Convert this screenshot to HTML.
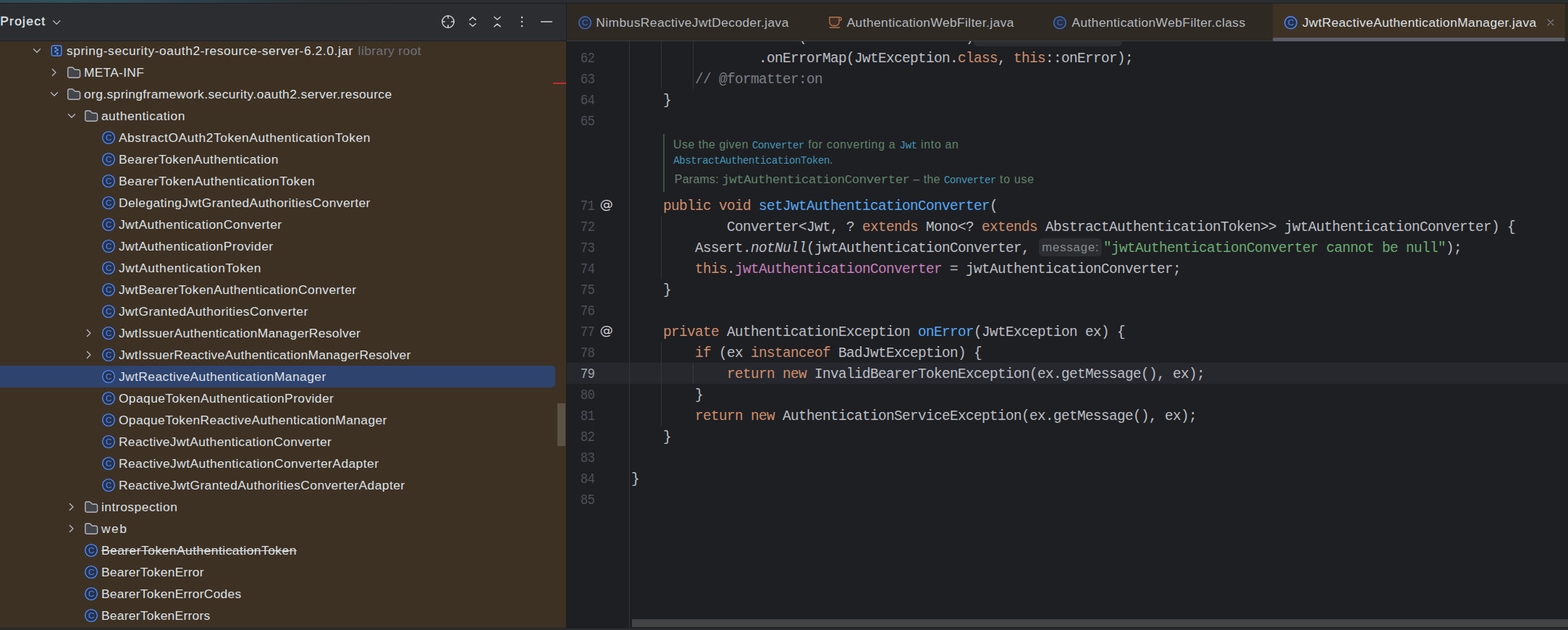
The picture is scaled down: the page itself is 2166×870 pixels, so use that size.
<!DOCTYPE html>
<html lang="en">
<head>
<meta charset="utf-8">
<title>JwtReactiveAuthenticationManager.java</title>
<style>
*{box-sizing:border-box}
html,body{margin:0;padding:0;background:#1e1f22}
body{width:2166px;height:870px;position:relative;overflow:hidden;font-family:"Liberation Sans",sans-serif;font-size:17.4px;color:#dfe1e5;-webkit-font-smoothing:antialiased}
div,span,svg{position:absolute}
span span{position:static}
.ic{overflow:visible}
.ui{font-family:"Liberation Sans",sans-serif;font-size:17.4px;line-height:30px;height:30px;white-space:pre}
.t{color:#dfe1e5}
.g{color:#6f737a}
.b{-webkit-text-stroke:0.4px #dfe1e5}
.strike{text-decoration:line-through;text-decoration-thickness:1.3px}
.tab{font-family:"Liberation Sans",sans-serif;font-size:17.4px;line-height:30px;height:30px;white-space:pre;color:#b4b8bf}
.tab.act{color:#dfe1e5}
.ln{font-family:"Liberation Mono",monospace;font-size:19.5px;letter-spacing:-0.9px;line-height:29px;height:29px;white-space:pre;color:#4b5059;text-align:right;width:40px;left:780.9px;transform:scaleX(0.89);transform-origin:100% 50%}
.ln.cur{color:#a1a3ab}
.cl{font-family:"Liberation Mono",monospace;font-size:19.5px;letter-spacing:-0.7019px;line-height:29px;height:29px;white-space:pre;color:#bcbec4;left:871.9px}
.k{color:#cf8e6d}
.f{color:#56a8f5}
.p{color:#c77dbb}
.s{color:#6aab73}
.c{color:#7a7e85}
.i{font-style:italic}
.guide{width:1px;background:#313438}
.doc{font-family:"Liberation Sans",sans-serif;white-space:pre;color:#62856d;line-height:22px;height:22px}
.dm{font-family:"Liberation Mono",monospace}
.dl{color:#4297bb}
.p0{color:#6a8471}
.hint{font-family:"Liberation Sans",sans-serif;white-space:pre;color:#868a91}
</style>
</head>
<body>

<div id="topstrip" style="left:0;top:0;width:2166px;height:4px;background:linear-gradient(90deg,#2f4a57 0,#30505c 90px,#2f4754 200px,#2c3a42 330px,#2b2f33 450px,#2b2d30 560px)"></div>
<div style="left:0;top:4px;width:2166px;height:1px;background:#1e1f22"></div>
<div id="project" style="left:0;top:5px;width:782px;height:862px;background:#3d3124;overflow:hidden">
<div id="phead" style="left:0;top:0;width:782px;height:51px;background:#2b2d30"></div>
<div style="left:0;top:51px;width:782px;height:1px;background:#1e1f22"></div>
</div>
<span class="ui t b" id="h_project" style="left:0.23px;top:14.2px;letter-spacing:1.276px;">Project</span>
<svg class="ic" style="left:66px;top:19px" width="25" height="25" viewBox="0 0 25 25" fill="none"><g transform="translate(1.45 1.35) scale(1.34375)"><path d="M4.65 6.3 8 9.7l3.35-3.4" stroke="#b4b8bf" stroke-width="1.0" stroke-linecap="round" stroke-linejoin="round"/></g></svg>
<svg class="ic" style="left:607px;top:18px" width="25" height="25" viewBox="0 0 25 25" fill="none"><g transform="translate(1.25 1.25) scale(1.34375)"><circle cx="8" cy="8" r="6.1" stroke="#ced0d6" stroke-width="1.1"/><path d="M8 1.9v3M8 11.1v3M1.9 8h3M11.1 8h3" stroke="#ced0d6" stroke-width="1.15"/></g></svg>
<svg class="ic" style="left:641px;top:18px" width="25" height="25" viewBox="0 0 25 25" fill="none"><g transform="translate(1.25 1.35) scale(1.34375)"><path d="M4.9 6 8 3.4l3.1 2.6M4.9 10 8 12.6l3.1-2.6" stroke="#ced0d6" stroke-width="1.1" stroke-linecap="round" stroke-linejoin="round"/></g></svg>
<svg class="ic" style="left:675px;top:18px" width="25" height="25" viewBox="0 0 25 25" fill="none"><g transform="translate(1.25 1.35) scale(1.34375)"><path d="M4.9 3.1 8 5.7l3.1-2.6M4.9 12.9 8 10.3l3.1 2.6" stroke="#ced0d6" stroke-width="1.1" stroke-linecap="round" stroke-linejoin="round"/></g></svg>
<svg class="ic" style="left:709px;top:18px" width="25" height="25" viewBox="0 0 25 25" fill="none"><g transform="translate(1.25 1.25) scale(1.34375)"><circle cx="8" cy="3.6" r="0.95" fill="#ced0d6"/><circle cx="8" cy="8" r="0.95" fill="#ced0d6"/><circle cx="8" cy="12.4" r="0.95" fill="#ced0d6"/></g></svg>
<svg class="ic" style="left:743px;top:18px" width="25" height="25" viewBox="0 0 25 25" fill="none"><g transform="translate(1.25 1.25) scale(1.34375)"><path d="M2.1 8h11.8" stroke="#ced0d6" stroke-width="1.15"/></g></svg>
<svg class="ic" style="left:39px;top:58px" width="25" height="25" viewBox="0 0 25 25" fill="none"><g transform="translate(1.25 1.25) scale(1.34375)"><path d="M4.65 6.3 8 9.7l3.35-3.4" stroke="#b4b8bf" stroke-width="1.0" stroke-linecap="round" stroke-linejoin="round"/></g></svg>
<svg class="ic" style="left:66px;top:58px" width="25" height="25" viewBox="0 0 25 25" fill="none"><g transform="translate(1.25 1.25) scale(1.34375)"><rect x="2.95" y="2.75" width="10.15" height="10.5" rx="1.9" fill="#25324d" stroke="#548af7" stroke-width="1.05"/><circle cx="7.2" cy="5.25" r="1.15" fill="#5a93fb"/><circle cx="9.0" cy="7.1" r="1.15" fill="#5a93fb"/><circle cx="7.0" cy="8.8" r="1.15" fill="#5a93fb"/><circle cx="9.0" cy="10.85" r="1.15" fill="#5a93fb"/></g></svg>
<span class="ui t" id="r0" style="left:91.90px;top:55.0px;letter-spacing:0.580px;">spring-security-oauth2-resource-server-6.2.0.jar</span>
<span class="ui g" id="r0b" style="left:494.62px;top:55.0px;letter-spacing:0.444px;">library root</span>
<svg class="ic" style="left:62px;top:88px" width="25" height="25" viewBox="0 0 25 25" fill="none"><g transform="translate(1.90 1.25) scale(1.34375)"><path d="M6.3 4.65 9.7 8l-3.4 3.35" stroke="#b4b8bf" stroke-width="1.0" stroke-linecap="round" stroke-linejoin="round"/></g></svg>
<svg class="ic" style="left:90px;top:88px" width="25" height="25" viewBox="0 0 25 25" fill="none"><g transform="translate(1.25 1.25) scale(1.34375)"><path d="M1.9 4.3a1.5 1.5 0 0 1 1.5-1.5h2.7a1.5 1.5 0 0 1 1.05.45l1.55 1.55a1.5 1.5 0 0 0 1.05.45h3.1a1.5 1.5 0 0 1 1.5 1.5v5.1a1.5 1.5 0 0 1-1.5 1.5h-9.45a1.5 1.5 0 0 1-1.5-1.5z" fill="#43454a" stroke="#b6b8be" stroke-width="1.05" stroke-linejoin="round"/></g></svg>
<span class="ui t" id="r1" style="left:115.90px;top:85.0px;letter-spacing:0.298px;">META-INF</span>
<svg class="ic" style="left:63px;top:118px" width="25" height="25" viewBox="0 0 25 25" fill="none"><g transform="translate(1.25 1.25) scale(1.34375)"><path d="M4.65 6.3 8 9.7l3.35-3.4" stroke="#b4b8bf" stroke-width="1.0" stroke-linecap="round" stroke-linejoin="round"/></g></svg>
<svg class="ic" style="left:90px;top:118px" width="25" height="25" viewBox="0 0 25 25" fill="none"><g transform="translate(1.25 1.25) scale(1.34375)"><path d="M1.9 4.3a1.5 1.5 0 0 1 1.5-1.5h2.7a1.5 1.5 0 0 1 1.05.45l1.55 1.55a1.5 1.5 0 0 0 1.05.45h3.1a1.5 1.5 0 0 1 1.5 1.5v5.1a1.5 1.5 0 0 1-1.5 1.5h-9.45a1.5 1.5 0 0 1-1.5-1.5z" fill="#43454a" stroke="#b6b8be" stroke-width="1.05" stroke-linejoin="round"/></g></svg>
<span class="ui t" id="r2" style="left:115.90px;top:115.0px;letter-spacing:0.412px;">org.springframework.security.oauth2.server.resource</span>
<svg class="ic" style="left:87px;top:148px" width="25" height="25" viewBox="0 0 25 25" fill="none"><g transform="translate(1.25 1.25) scale(1.34375)"><path d="M4.65 6.3 8 9.7l3.35-3.4" stroke="#b4b8bf" stroke-width="1.0" stroke-linecap="round" stroke-linejoin="round"/></g></svg>
<svg class="ic" style="left:114px;top:148px" width="25" height="25" viewBox="0 0 25 25" fill="none"><g transform="translate(1.25 1.25) scale(1.34375)"><path d="M1.9 4.3a1.5 1.5 0 0 1 1.5-1.5h2.7a1.5 1.5 0 0 1 1.05.45l1.55 1.55a1.5 1.5 0 0 0 1.05.45h3.1a1.5 1.5 0 0 1 1.5 1.5v5.1a1.5 1.5 0 0 1-1.5 1.5h-9.45a1.5 1.5 0 0 1-1.5-1.5z" fill="#43454a" stroke="#b6b8be" stroke-width="1.05" stroke-linejoin="round"/></g></svg>
<span class="ui t" id="r3" style="left:139.90px;top:145.0px;letter-spacing:0.549px;">authentication</span>
<svg class="ic" style="left:138px;top:178px" width="25" height="25" viewBox="0 0 25 25" fill="none"><g transform="translate(1.25 1.25) scale(1.34375)"><circle cx="8" cy="8" r="6.2" fill="#25324d" stroke="#548af7" stroke-width="1.05"/><text x="8.05" y="11.05" font-family="Liberation Sans, sans-serif" font-size="8.6" text-anchor="middle" fill="#548af7">C</text></g></svg>
<span class="ui t" id="r4" style="left:163.90px;top:175.0px;letter-spacing:0.590px;">AbstractOAuth2TokenAuthenticationToken</span>
<svg class="ic" style="left:138px;top:208px" width="25" height="25" viewBox="0 0 25 25" fill="none"><g transform="translate(1.25 1.25) scale(1.34375)"><circle cx="8" cy="8" r="6.2" fill="#25324d" stroke="#548af7" stroke-width="1.05"/><text x="8.05" y="11.05" font-family="Liberation Sans, sans-serif" font-size="8.6" text-anchor="middle" fill="#548af7">C</text></g></svg>
<span class="ui t" id="r5" style="left:163.90px;top:205.0px;letter-spacing:0.485px;">BearerTokenAuthentication</span>
<svg class="ic" style="left:138px;top:238px" width="25" height="25" viewBox="0 0 25 25" fill="none"><g transform="translate(1.25 1.25) scale(1.34375)"><circle cx="8" cy="8" r="6.2" fill="#25324d" stroke="#548af7" stroke-width="1.05"/><text x="8.05" y="11.05" font-family="Liberation Sans, sans-serif" font-size="8.6" text-anchor="middle" fill="#548af7">C</text></g></svg>
<span class="ui t" id="r6" style="left:163.90px;top:235.0px;letter-spacing:0.538px;">BearerTokenAuthenticationToken</span>
<svg class="ic" style="left:138px;top:268px" width="25" height="25" viewBox="0 0 25 25" fill="none"><g transform="translate(1.25 1.25) scale(1.34375)"><circle cx="8" cy="8" r="6.2" fill="#25324d" stroke="#548af7" stroke-width="1.05"/><text x="8.05" y="11.05" font-family="Liberation Sans, sans-serif" font-size="8.6" text-anchor="middle" fill="#548af7">C</text></g></svg>
<span class="ui t" id="r7" style="left:163.90px;top:265.0px;letter-spacing:0.433px;">DelegatingJwtGrantedAuthoritiesConverter</span>
<svg class="ic" style="left:138px;top:298px" width="25" height="25" viewBox="0 0 25 25" fill="none"><g transform="translate(1.25 1.25) scale(1.34375)"><circle cx="8" cy="8" r="6.2" fill="#25324d" stroke="#548af7" stroke-width="1.05"/><text x="8.05" y="11.05" font-family="Liberation Sans, sans-serif" font-size="8.6" text-anchor="middle" fill="#548af7">C</text></g></svg>
<span class="ui t" id="r8" style="left:163.90px;top:295.0px;letter-spacing:0.503px;">JwtAuthenticationConverter</span>
<svg class="ic" style="left:138px;top:328px" width="25" height="25" viewBox="0 0 25 25" fill="none"><g transform="translate(1.25 1.25) scale(1.34375)"><circle cx="8" cy="8" r="6.2" fill="#25324d" stroke="#548af7" stroke-width="1.05"/><text x="8.05" y="11.05" font-family="Liberation Sans, sans-serif" font-size="8.6" text-anchor="middle" fill="#548af7">C</text></g></svg>
<span class="ui t" id="r9" style="left:163.90px;top:325.0px;letter-spacing:0.506px;">JwtAuthenticationProvider</span>
<svg class="ic" style="left:138px;top:358px" width="25" height="25" viewBox="0 0 25 25" fill="none"><g transform="translate(1.25 1.25) scale(1.34375)"><circle cx="8" cy="8" r="6.2" fill="#25324d" stroke="#548af7" stroke-width="1.05"/><text x="8.05" y="11.05" font-family="Liberation Sans, sans-serif" font-size="8.6" text-anchor="middle" fill="#548af7">C</text></g></svg>
<span class="ui t" id="r10" style="left:163.90px;top:355.0px;letter-spacing:0.664px;">JwtAuthenticationToken</span>
<svg class="ic" style="left:138px;top:388px" width="25" height="25" viewBox="0 0 25 25" fill="none"><g transform="translate(1.25 1.25) scale(1.34375)"><circle cx="8" cy="8" r="6.2" fill="#25324d" stroke="#548af7" stroke-width="1.05"/><text x="8.05" y="11.05" font-family="Liberation Sans, sans-serif" font-size="8.6" text-anchor="middle" fill="#548af7">C</text></g></svg>
<span class="ui t" id="r11" style="left:163.90px;top:385.0px;letter-spacing:0.471px;">JwtBearerTokenAuthenticationConverter</span>
<svg class="ic" style="left:138px;top:418px" width="25" height="25" viewBox="0 0 25 25" fill="none"><g transform="translate(1.25 1.25) scale(1.34375)"><circle cx="8" cy="8" r="6.2" fill="#25324d" stroke="#548af7" stroke-width="1.05"/><text x="8.05" y="11.05" font-family="Liberation Sans, sans-serif" font-size="8.6" text-anchor="middle" fill="#548af7">C</text></g></svg>
<span class="ui t" id="r12" style="left:163.90px;top:415.0px;letter-spacing:0.478px;">JwtGrantedAuthoritiesConverter</span>
<svg class="ic" style="left:110px;top:448px" width="25" height="25" viewBox="0 0 25 25" fill="none"><g transform="translate(1.90 1.25) scale(1.34375)"><path d="M6.3 4.65 9.7 8l-3.4 3.35" stroke="#b4b8bf" stroke-width="1.0" stroke-linecap="round" stroke-linejoin="round"/></g></svg>
<svg class="ic" style="left:138px;top:448px" width="25" height="25" viewBox="0 0 25 25" fill="none"><g transform="translate(1.25 1.25) scale(1.34375)"><circle cx="8" cy="8" r="6.2" fill="#25324d" stroke="#548af7" stroke-width="1.05"/><text x="8.05" y="11.05" font-family="Liberation Sans, sans-serif" font-size="8.6" text-anchor="middle" fill="#548af7">C</text></g></svg>
<span class="ui t" id="r13" style="left:163.90px;top:445.0px;letter-spacing:0.354px;">JwtIssuerAuthenticationManagerResolver</span>
<svg class="ic" style="left:110px;top:478px" width="25" height="25" viewBox="0 0 25 25" fill="none"><g transform="translate(1.90 1.25) scale(1.34375)"><path d="M6.3 4.65 9.7 8l-3.4 3.35" stroke="#b4b8bf" stroke-width="1.0" stroke-linecap="round" stroke-linejoin="round"/></g></svg>
<svg class="ic" style="left:138px;top:478px" width="25" height="25" viewBox="0 0 25 25" fill="none"><g transform="translate(1.25 1.25) scale(1.34375)"><circle cx="8" cy="8" r="6.2" fill="#25324d" stroke="#548af7" stroke-width="1.05"/><text x="8.05" y="11.05" font-family="Liberation Sans, sans-serif" font-size="8.6" text-anchor="middle" fill="#548af7">C</text></g></svg>
<span class="ui t" id="r14" style="left:163.90px;top:475.0px;letter-spacing:0.330px;">JwtIssuerReactiveAuthenticationManagerResolver</span>
<div style="left:0;top:505px;width:767px;height:30px;background:#2e436e;border-radius:0 5px 5px 0"></div>
<svg class="ic" style="left:138px;top:508px" width="25" height="25" viewBox="0 0 25 25" fill="none"><g transform="translate(1.25 1.25) scale(1.34375)"><circle cx="8" cy="8" r="6.2" fill="#25324d" stroke="#548af7" stroke-width="1.05"/><text x="8.05" y="11.05" font-family="Liberation Sans, sans-serif" font-size="8.6" text-anchor="middle" fill="#548af7">C</text></g></svg>
<span class="ui t" id="r15" style="left:163.90px;top:505.0px;letter-spacing:0.443px;">JwtReactiveAuthenticationManager</span>
<svg class="ic" style="left:138px;top:538px" width="25" height="25" viewBox="0 0 25 25" fill="none"><g transform="translate(1.25 1.25) scale(1.34375)"><circle cx="8" cy="8" r="6.2" fill="#25324d" stroke="#548af7" stroke-width="1.05"/><text x="8.05" y="11.05" font-family="Liberation Sans, sans-serif" font-size="8.6" text-anchor="middle" fill="#548af7">C</text></g></svg>
<span class="ui t" id="r16" style="left:163.90px;top:535.0px;letter-spacing:0.428px;">OpaqueTokenAuthenticationProvider</span>
<svg class="ic" style="left:138px;top:568px" width="25" height="25" viewBox="0 0 25 25" fill="none"><g transform="translate(1.25 1.25) scale(1.34375)"><circle cx="8" cy="8" r="6.2" fill="#25324d" stroke="#548af7" stroke-width="1.05"/><text x="8.05" y="11.05" font-family="Liberation Sans, sans-serif" font-size="8.6" text-anchor="middle" fill="#548af7">C</text></g></svg>
<span class="ui t" id="r17" style="left:163.90px;top:565.0px;letter-spacing:0.401px;">OpaqueTokenReactiveAuthenticationManager</span>
<svg class="ic" style="left:138px;top:598px" width="25" height="25" viewBox="0 0 25 25" fill="none"><g transform="translate(1.25 1.25) scale(1.34375)"><circle cx="8" cy="8" r="6.2" fill="#25324d" stroke="#548af7" stroke-width="1.05"/><text x="8.05" y="11.05" font-family="Liberation Sans, sans-serif" font-size="8.6" text-anchor="middle" fill="#548af7">C</text></g></svg>
<span class="ui t" id="r18" style="left:163.90px;top:595.0px;letter-spacing:0.415px;">ReactiveJwtAuthenticationConverter</span>
<svg class="ic" style="left:138px;top:628px" width="25" height="25" viewBox="0 0 25 25" fill="none"><g transform="translate(1.25 1.25) scale(1.34375)"><circle cx="8" cy="8" r="6.2" fill="#25324d" stroke="#548af7" stroke-width="1.05"/><text x="8.05" y="11.05" font-family="Liberation Sans, sans-serif" font-size="8.6" text-anchor="middle" fill="#548af7">C</text></g></svg>
<span class="ui t" id="r19" style="left:163.90px;top:625.0px;letter-spacing:0.445px;">ReactiveJwtAuthenticationConverterAdapter</span>
<svg class="ic" style="left:138px;top:658px" width="25" height="25" viewBox="0 0 25 25" fill="none"><g transform="translate(1.25 1.25) scale(1.34375)"><circle cx="8" cy="8" r="6.2" fill="#25324d" stroke="#548af7" stroke-width="1.05"/><text x="8.05" y="11.05" font-family="Liberation Sans, sans-serif" font-size="8.6" text-anchor="middle" fill="#548af7">C</text></g></svg>
<span class="ui t" id="r20" style="left:163.90px;top:655.0px;letter-spacing:0.436px;">ReactiveJwtGrantedAuthoritiesConverterAdapter</span>
<svg class="ic" style="left:86px;top:688px" width="25" height="25" viewBox="0 0 25 25" fill="none"><g transform="translate(1.90 1.25) scale(1.34375)"><path d="M6.3 4.65 9.7 8l-3.4 3.35" stroke="#b4b8bf" stroke-width="1.0" stroke-linecap="round" stroke-linejoin="round"/></g></svg>
<svg class="ic" style="left:114px;top:688px" width="25" height="25" viewBox="0 0 25 25" fill="none"><g transform="translate(1.25 1.25) scale(1.34375)"><path d="M1.9 4.3a1.5 1.5 0 0 1 1.5-1.5h2.7a1.5 1.5 0 0 1 1.05.45l1.55 1.55a1.5 1.5 0 0 0 1.05.45h3.1a1.5 1.5 0 0 1 1.5 1.5v5.1a1.5 1.5 0 0 1-1.5 1.5h-9.45a1.5 1.5 0 0 1-1.5-1.5z" fill="#43454a" stroke="#b6b8be" stroke-width="1.05" stroke-linejoin="round"/></g></svg>
<span class="ui t" id="r21" style="left:139.90px;top:685.0px;letter-spacing:0.526px;">introspection</span>
<svg class="ic" style="left:86px;top:718px" width="25" height="25" viewBox="0 0 25 25" fill="none"><g transform="translate(1.90 1.25) scale(1.34375)"><path d="M6.3 4.65 9.7 8l-3.4 3.35" stroke="#b4b8bf" stroke-width="1.0" stroke-linecap="round" stroke-linejoin="round"/></g></svg>
<svg class="ic" style="left:114px;top:718px" width="25" height="25" viewBox="0 0 25 25" fill="none"><g transform="translate(1.25 1.25) scale(1.34375)"><path d="M1.9 4.3a1.5 1.5 0 0 1 1.5-1.5h2.7a1.5 1.5 0 0 1 1.05.45l1.55 1.55a1.5 1.5 0 0 0 1.05.45h3.1a1.5 1.5 0 0 1 1.5 1.5v5.1a1.5 1.5 0 0 1-1.5 1.5h-9.45a1.5 1.5 0 0 1-1.5-1.5z" fill="#43454a" stroke="#b6b8be" stroke-width="1.05" stroke-linejoin="round"/></g></svg>
<span class="ui t" id="r22" style="left:139.90px;top:715.0px;letter-spacing:1.511px;">web</span>
<svg class="ic" style="left:114px;top:748px" width="25" height="25" viewBox="0 0 25 25" fill="none"><g transform="translate(1.25 1.25) scale(1.34375)"><circle cx="8" cy="8" r="6.2" fill="#25324d" stroke="#548af7" stroke-width="1.05"/><text x="8.05" y="11.05" font-family="Liberation Sans, sans-serif" font-size="8.6" text-anchor="middle" fill="#548af7">C</text></g></svg>
<span class="ui t strike" id="r23" style="left:139.90px;top:745.0px;letter-spacing:0.492px;">BearerTokenAuthenticationToken</span>
<svg class="ic" style="left:114px;top:778px" width="25" height="25" viewBox="0 0 25 25" fill="none"><g transform="translate(1.25 1.25) scale(1.34375)"><circle cx="8" cy="8" r="6.2" fill="#25324d" stroke="#548af7" stroke-width="1.05"/><text x="8.05" y="11.05" font-family="Liberation Sans, sans-serif" font-size="8.6" text-anchor="middle" fill="#548af7">C</text></g></svg>
<span class="ui t" id="r24" style="left:139.90px;top:775.0px;letter-spacing:0.292px;">BearerTokenError</span>
<svg class="ic" style="left:114px;top:808px" width="25" height="25" viewBox="0 0 25 25" fill="none"><g transform="translate(1.25 1.25) scale(1.34375)"><circle cx="8" cy="8" r="6.2" fill="#25324d" stroke="#548af7" stroke-width="1.05"/><text x="8.05" y="11.05" font-family="Liberation Sans, sans-serif" font-size="8.6" text-anchor="middle" fill="#548af7">C</text></g></svg>
<span class="ui t" id="r25" style="left:139.90px;top:805.0px;letter-spacing:0.290px;">BearerTokenErrorCodes</span>
<svg class="ic" style="left:114px;top:838px" width="25" height="25" viewBox="0 0 25 25" fill="none"><g transform="translate(1.25 1.25) scale(1.34375)"><circle cx="8" cy="8" r="6.2" fill="#25324d" stroke="#548af7" stroke-width="1.05"/><text x="8.05" y="11.05" font-family="Liberation Sans, sans-serif" font-size="8.6" text-anchor="middle" fill="#548af7">C</text></g></svg>
<span class="ui t" id="r26" style="left:139.90px;top:835.0px;letter-spacing:0.279px;">BearerTokenErrors</span>
<div style="left:770px;top:557px;width:11px;height:59px;background:#5c5347"></div>
<div style="left:764px;top:114px;width:18px;height:2px;background:#c02e2e"></div>
<div style="left:782px;top:5px;width:1px;height:52px;background:#1e1f22"></div>
<div id="tabs" style="left:783px;top:5px;width:1383px;height:51px;background:#2e2923"></div>
<div style="left:783px;top:56px;width:1383px;height:1px;background:#393b40"></div>
<div style="left:1758px;top:5px;width:404px;height:51px;background:#3e3225"></div>
<div style="left:1758px;top:52px;width:404px;height:5px;background:#5b5e66;border-radius:2.5px"></div>
<div style="left:2162px;top:5px;width:4px;height:51px;background:#2b2825"></div>
<svg class="ic" style="left:796px;top:19px" width="25" height="25" viewBox="0 0 25 25" fill="none"><g transform="translate(1.35 1.55) scale(1.34375)"><circle cx="8" cy="8" r="6.2" fill="#262f45" stroke="#456eba" stroke-width="1.05"/><text x="8.05" y="11.05" font-family="Liberation Sans, sans-serif" font-size="8.6" text-anchor="middle" fill="#456eba">C</text></g></svg>
<span class="tab" id="tab1" style="left:823.36px;top:16.3px;letter-spacing:0.420px;">NimbusReactiveJwtDecoder.java</span>
<svg class="ic" style="left:1141px;top:19px" width="25" height="25" viewBox="0 0 25 25" fill="none"><g transform="translate(1.85 1.55) scale(1.34375)"><path d="M2.27 2.4H12.1V7.4a3.7 3.7 0 0 1-3.7 3.7H5.97a3.7 3.7 0 0 1-3.7-3.7z" fill="#3f2d27" stroke="#b4744f" stroke-width="1.0" stroke-linejoin="round"/><path d="M12.1 2.45h0.85a1.45 1.45 0 0 1 1.45 1.45v0.35a1.45 1.45 0 0 1-1.45 1.45h-0.85" stroke="#b4744f" stroke-width="1.0"/><path d="M2.55 13h10" stroke="#b4744f" stroke-width="1.0" stroke-linecap="round"/></g></svg>
<span class="tab" id="tab2" style="left:1169.64px;top:16.3px;letter-spacing:0.400px;">AuthenticationWebFilter.java</span>
<svg class="ic" style="left:1452px;top:19px" width="25" height="25" viewBox="0 0 25 25" fill="none"><g transform="translate(1.25 1.55) scale(1.34375)"><circle cx="8" cy="8" r="6.2" fill="#262f45" stroke="#456eba" stroke-width="1.05"/><text x="8.05" y="11.05" font-family="Liberation Sans, sans-serif" font-size="8.6" text-anchor="middle" fill="#456eba">C</text></g></svg>
<span class="tab" id="tab3" style="left:1480.43px;top:16.3px;letter-spacing:0.427px;">AuthenticationWebFilter.class</span>
<svg class="ic" style="left:1771px;top:19px" width="25" height="25" viewBox="0 0 25 25" fill="none"><g transform="translate(1.25 1.55) scale(1.34375)"><circle cx="8" cy="8" r="6.2" fill="#25324d" stroke="#548af7" stroke-width="1.05"/><text x="8.05" y="11.05" font-family="Liberation Sans, sans-serif" font-size="8.6" text-anchor="middle" fill="#548af7">C</text></g></svg>
<span class="tab act" id="tab4" style="left:1798.89px;top:16.3px;letter-spacing:0.415px;">JwtReactiveAuthenticationManager.java</span>
<svg class="ic" style="left:2130px;top:19px" width="25" height="25" viewBox="0 0 25 25" fill="none"><g transform="translate(1.25 1.25) scale(1.34375)"><path d="M5.1 5.1l5.8 5.8M10.9 5.1l-5.8 5.8" stroke="#7f838b" stroke-width="1.0" stroke-linecap="round"/></g></svg>
<div id="code" style="left:783px;top:57px;width:1383px;height:810px;overflow:hidden">
</div>
<div style="left:783px;top:500.5px;width:1383px;height:29px;background:#26282e"></div>
<div style="left:869px;top:57px;width:1px;height:810px;background:#313438"></div>
<div class="guide" style="left:913px;top:57px;height:65.5px;background:#313438"></div>
<div class="guide" style="left:957px;top:57px;height:65.5px;background:#313438"></div>
<div class="guide" style="left:913px;top:297.5px;height:87.0px;background:#313438"></div>
<div class="guide" style="left:913px;top:471.5px;height:116.0px;background:#313438"></div>
<div class="guide" style="left:957px;top:500.5px;height:29.0px;background:#36393e"></div>
<div style="left:783px;top:57px;width:1383px;height:12px;overflow:hidden"><span class="cl" style="left:88.89999999999998px;top:-19.2px">                .cast(Authentication.<span class="k">class</span>)</span><div style="left:562px;top:-18px;width:205px;height:24.5px;background:#2b2d30;border-radius:5px"></div></div>
<span class="ln" style="top:66.8px">62</span>
<span class="cl" style="top:66.8px">                .onErrorMap(JwtException.<span class="k">class</span>, <span class="k">this</span>::onError);</span>
<span class="ln" style="top:95.8px">63</span>
<span class="cl" style="top:95.8px">        <span class="c">// @formatter:on</span></span>
<span class="ln" style="top:124.8px">64</span>
<span class="cl" style="top:124.8px">    }</span>
<span class="ln" style="top:153.8px">65</span>
<span class="ln" style="top:270.8px">71</span>
<span class="cl" style="top:270.8px">    <span class="k">public</span> <span class="k">void</span> <span class="f">setJwtAuthenticationConverter</span>(</span>
<span class="ln" style="top:299.8px">72</span>
<span class="cl" style="top:299.8px">            Converter&lt;Jwt, ? <span class="k">extends</span> Mono&lt;? <span class="k">extends</span> AbstractAuthenticationToken&gt;&gt; jwtAuthenticationConverter) {</span>
<span class="ln" style="top:328.8px">73</span>
<span class="cl" style="top:328.8px">        Assert.<span class="i">notNull</span>(jwtAuthenticationConverter, </span>
<div style="left:1435px;top:329.0px;width:87px;height:24.5px;background:#2b2d30;border-radius:5px"></div>
<span class="hint" id="hint" style="left:1439.26px;top:329.7px;letter-spacing:0.817px;font-size:16.8px;line-height:24.5px;height:24.5px;">message:</span>
<span class="cl" style="left:1524px;top:328.8px"><span class="s">"jwtAuthenticationConverter cannot be null"</span>);</span>
<span class="ln" style="top:357.8px">74</span>
<span class="cl" style="top:357.8px">        <span class="k">this</span>.<span class="p">jwtAuthenticationConverter</span> = jwtAuthenticationConverter;</span>
<span class="ln" style="top:386.8px">75</span>
<span class="cl" style="top:386.8px">    }</span>
<span class="ln" style="top:415.8px">76</span>
<span class="ln" style="top:444.8px">77</span>
<span class="cl" style="top:444.8px">    <span class="k">private</span> AuthenticationException <span class="f">onError</span>(JwtException ex) {</span>
<span class="ln" style="top:473.8px">78</span>
<span class="cl" style="top:473.8px">        <span class="k">if</span> (ex <span class="k">instanceof</span> BadJwtException) {</span>
<span class="ln cur" style="top:502.8px">79</span>
<span class="cl" style="top:502.8px">            <span class="k">return</span> <span class="k">new</span> InvalidBearerTokenException(ex.getMessage(), ex);</span>
<span class="ln" style="top:531.8px">80</span>
<span class="cl" style="top:531.8px">        }</span>
<span class="ln" style="top:560.8px">81</span>
<span class="cl" style="top:560.8px">        <span class="k">return</span> <span class="k">new</span> AuthenticationServiceException(ex.getMessage(), ex);</span>
<span class="ln" style="top:589.8px">82</span>
<span class="cl" style="top:589.8px">    }</span>
<span class="ln" style="top:618.8px">83</span>
<span class="ln" style="top:647.8px">84</span>
<span class="cl" style="top:647.8px">}</span>
<span class="ln" style="top:676.8px">85</span>
<svg class="ic" style="left:823px;top:268px" width="28" height="28" viewBox="0 0 28 28"><text x="14.60" y="19.80" font-family="DejaVu Sans, Liberation Sans, sans-serif" font-size="18.4" text-anchor="middle" fill="#ced0d6">@</text></svg>
<svg class="ic" style="left:823px;top:442px" width="28" height="28" viewBox="0 0 28 28"><text x="14.60" y="19.80" font-family="DejaVu Sans, Liberation Sans, sans-serif" font-size="18.4" text-anchor="middle" fill="#ced0d6">@</text></svg>
<div style="left:916px;top:185px;width:2px;height:80px;background:#3e5243"></div>
<span class="doc" style="left:930.0px;top:189px;font-size:15.9px"><span class="" id="d10" style="font-size:15.9px;letter-spacing:0.529px;">Use the given </span><span class="dm dl" id="d11" style="font-size:14.2px;letter-spacing:-0.514px;">Converter</span><span class="" id="d12" style="font-size:15.9px;letter-spacing:0.735px;"> for converting a </span><span class="dm dl" id="d13" style="font-size:14.2px;letter-spacing:-0.384px;">Jwt</span><span class="" id="d14" style="font-size:15.9px;letter-spacing:0.683px;"> into an</span></span>
<span class="doc" style="left:930.2px;top:210px;font-size:15.9px"><span class="dm dl" id="d20" style="font-size:14.2px;letter-spacing:-0.521px;">AbstractAuthenticationToken</span><span class="" id="d21" style="font-size:15.9px;letter-spacing:0.579px;">.</span></span>
<span class="doc" style="left:931.8px;top:237px;font-size:15.9px"><span class="p0" id="d30" style="font-size:15.9px;letter-spacing:0.290px;">Params:</span><span class="" id="d31" style="font-size:15.9px;letter-spacing:-0.218px;"> </span><span class="dm" id="d32" style="font-size:17.4px;letter-spacing:-0.460px;">jwtAuthenticationConverter</span><span class="" id="d33" style="font-size:15.9px;letter-spacing:0.459px;"> – the </span><span class="dm dl" id="d34" style="font-size:14.2px;letter-spacing:-0.514px;">Converter</span><span class="" id="d35" style="font-size:15.9px;letter-spacing:0.713px;"> to use</span></span>
<div style="left:873px;top:855px;width:1293px;height:11px;background:#434345"></div>
<div style="left:0;top:867px;width:2166px;height:1px;background:#212225"></div>
<div style="left:0;top:868px;width:2166px;height:2px;background:#2b2d30"></div>
</body>
</html>
